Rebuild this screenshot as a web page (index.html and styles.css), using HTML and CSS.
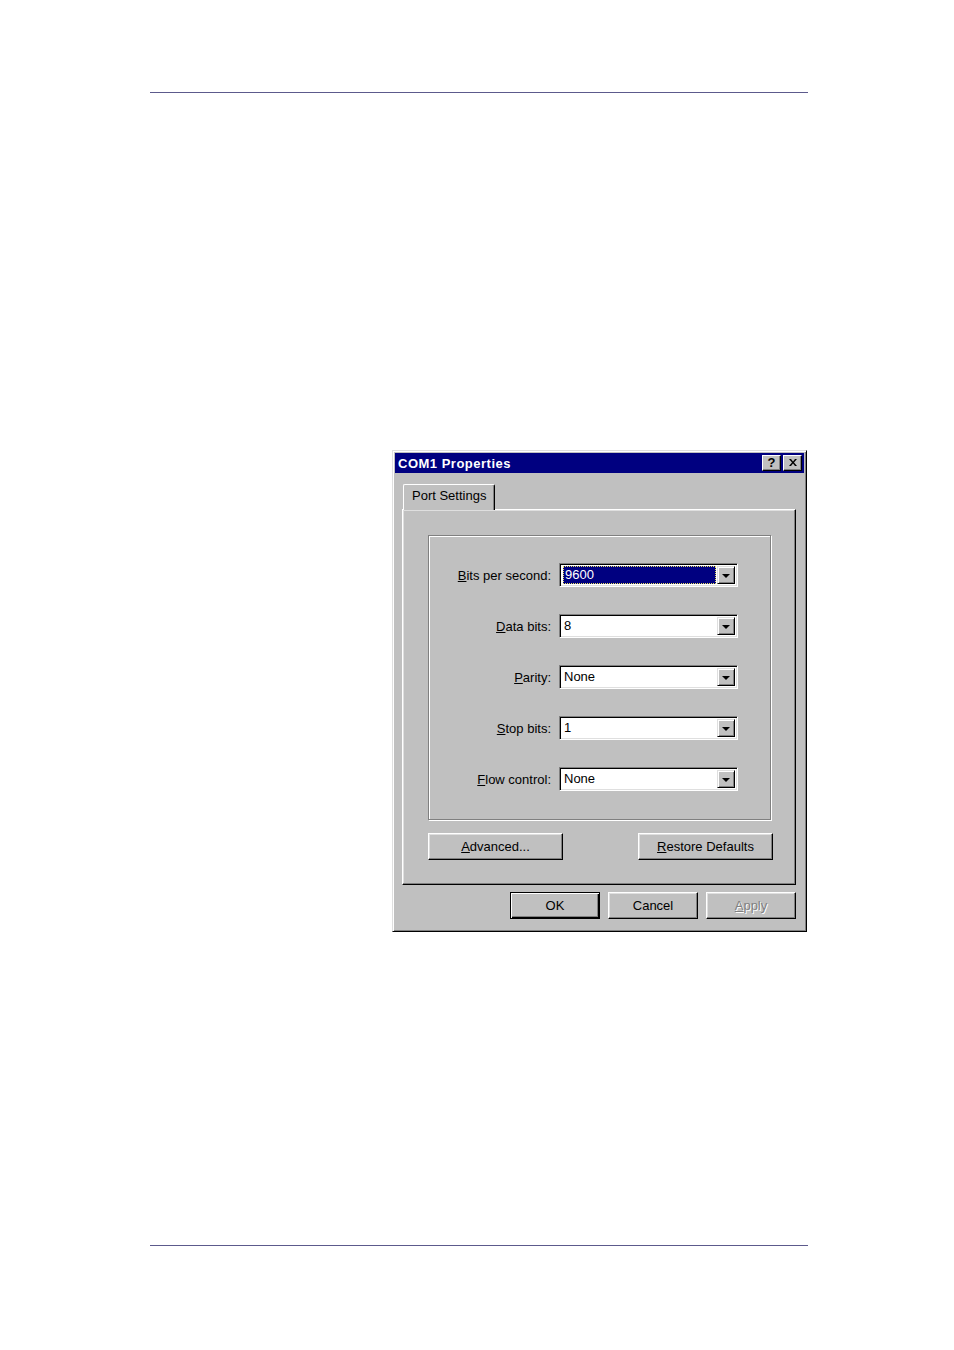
FILE: index.html
```html
<!DOCTYPE html>
<html>
<head>
<meta charset="utf-8">
<link rel="stylesheet" href="styles.css">
</head>
<body>
<div class="page">
  <div class="rule rule-top"></div>

  <div class="dialog">
    <div class="titlebar">
      <span class="title">COM1 Properties</span>
      <div class="title-btns">
        <div class="tbtn tbtn-help">?</div>
        <div class="tbtn tbtn-close">
          <svg width="8" height="7" viewBox="0 0 8 7"><path d="M0 0h2l2 2.5 2-2.5h2l-3 3.5 3 3.5h-2l-2-2.5-2 2.5h-2l3-3.5z" fill="#000"/></svg>
        </div>
      </div>
    </div>

    <div class="tabs">
      <div class="tab">Port Settings</div>
    </div>

    <div class="sheet">
      <div class="group">
        <div class="row">
          <span class="label"><u>B</u>its per second:</span>
          <div class="combo">
            <div class="combo-value selected"><span class="sel">9600</span></div>
            <div class="drop"><span class="arrow"></span></div>
          </div>
        </div>
        <div class="row">
          <span class="label"><u>D</u>ata bits:</span>
          <div class="combo">
            <div class="combo-value">8</div>
            <div class="drop"><span class="arrow"></span></div>
          </div>
        </div>
        <div class="row">
          <span class="label"><u>P</u>arity:</span>
          <div class="combo">
            <div class="combo-value">None</div>
            <div class="drop"><span class="arrow"></span></div>
          </div>
        </div>
        <div class="row">
          <span class="label"><u>S</u>top bits:</span>
          <div class="combo">
            <div class="combo-value">1</div>
            <div class="drop"><span class="arrow"></span></div>
          </div>
        </div>
        <div class="row">
          <span class="label"><u>F</u>low control:</span>
          <div class="combo">
            <div class="combo-value">None</div>
            <div class="drop"><span class="arrow"></span></div>
          </div>
        </div>
      </div>
      <div class="sheet-btns">
        <div class="btn btn-wide"><u>A</u>dvanced...</div>
        <div class="btn btn-wide"><u>R</u>estore Defaults</div>
      </div>
    </div>

    <div class="dlg-btns">
      <div class="btn btn-default">OK</div>
      <div class="btn">Cancel</div>
      <div class="btn btn-disabled"><u>A</u>pply</div>
    </div>
  </div>

  <div class="rule rule-bottom"></div>
</div>
</body>
</html>
```

FILE: styles.css
```css
* { box-sizing: border-box; }
html, body { margin: 0; padding: 0; background: #fff; }
body { width: 954px; height: 1350px; font-family: "Liberation Sans", Arial, sans-serif; font-size: 13px; color: #000; }
.page { display: flex; flex-direction: column; }

.rule { height: 1px; width: 658px; margin-left: 150px; background: #5c5a8c; }
.rule-top { margin-top: 92px; }
.rule-bottom { margin-top: 313px; }

.dialog {
  margin-top: 357px;
  margin-left: 392px;
  width: 415px;
  height: 482px;
  background: #c0c0c0;
  border: 1px solid;
  border-color: #dfdfdf #000 #000 #dfdfdf;
  box-shadow: inset 1px 1px #fff, inset -1px -1px #808080;
  padding: 2px;
  display: flex;
  flex-direction: column;
}

.titlebar {
  height: 20px;
  background: #000080;
  display: flex;
  align-items: center;
  justify-content: space-between;
  padding: 0 2px 0 3px;
}
.title { color: #fff; font-weight: bold; font-size: 13px; letter-spacing: 0.5px; }
.title-btns { display: flex; gap: 2px; }
.tbtn {
  width: 19px; height: 16px;
  background: #c0c0c0;
  border: 1px solid;
  border-color: #fff #000 #000 #fff;
  box-shadow: inset -1px -1px #808080;
  display: flex; align-items: center; justify-content: center;
}
.tbtn-help { font-weight: bold; font-size: 13px; line-height: 1; padding-bottom: 1px; }
.tbtn-close svg { display: block; margin-bottom: 1px; }

.tabs { display: flex; margin-top: 11px; padding-left: 8px; height: 25px; }
.tab {
  position: relative; z-index: 2;
  width: 92px; height: 26px;
  background: #c0c0c0;
  border-left: 1px solid #fff;
  border-top: 1px solid #fff;
  border-right: 1px solid #000;
  border-radius: 2px 2px 0 0;
  box-shadow: inset -1px 0 #808080;
  padding: 3px 0 0 8px;
  white-space: nowrap;
}

.sheet {
  margin-left: 7px;
  width: 394px;
  height: 376px;
  border: 1px solid;
  border-color: #fff #000 #000 #fff;
  box-shadow: inset -1px -1px #808080, inset 1px 1px #dfdfdf;
  padding: 25px 23px 0 25px;
  display: flex;
  flex-direction: column;
}

.group {
  width: 343px;
  height: 285px;
  border: 1px solid #808080;
  box-shadow: inset 1px 1px #fff, 1px 1px 0 #fff;
  padding: 27px 32px 0 0;
  display: flex;
  flex-direction: column;
  gap: 27px;
}
.row { display: flex; align-items: center; justify-content: flex-end; gap: 8px; height: 24px; }
.label { white-space: nowrap; }
.combo {
  width: 179px; height: 24px;
  background: #fff;
  border: 1px solid;
  border-color: #808080 #fff #fff #808080;
  box-shadow: inset 1px 1px #000, inset -1px -1px #dfdfdf;
  padding: 2px;
  display: flex;
}
.combo-value { flex: 1; padding-left: 2px; line-height: 18px; }
.combo-value.selected { padding: 0 1px 0 1px; }
.sel {
  display: block; height: 18px; line-height: 16px;
  background: #000080; color: #fff;
  border: 1px dotted #e8e060;
  padding-left: 1px;
}
.drop {
  width: 18px; height: 18px;
  background: #c0c0c0;
  border: 1px solid;
  border-color: #dfdfdf #000 #000 #dfdfdf;
  box-shadow: inset 1px 1px #fff, inset -1px -1px #808080;
  display: flex; align-items: center; justify-content: center;
}
.arrow {
  width: 0; height: 0;
  border-left: 4px solid transparent;
  border-right: 4px solid transparent;
  border-top: 4px solid #000;
  margin-top: 1px;
}

.sheet-btns { display: flex; justify-content: space-between; margin-top: 13px; width: 345px; }
.btn {
  width: 90px; height: 27px;
  background: #c0c0c0;
  border: 1px solid;
  border-color: #fff #000 #000 #fff;
  box-shadow: inset -1px -1px #808080, inset 1px 1px #dfdfdf;
  display: flex; align-items: center; justify-content: center;
  white-space: nowrap;
  padding-bottom: 1px;
}
.btn-wide { width: 135px; }
.btn-default {
  border: 1px solid #000;
  box-shadow: inset 1px 1px #fff, inset -1px -1px #000, inset -2px -2px #808080;
}
.btn-disabled { color: #808080; text-shadow: 1px 1px 0 #fff; }

.dlg-btns { display: flex; justify-content: flex-end; gap: 8px; margin-top: 7px; padding-right: 8px; }
```
